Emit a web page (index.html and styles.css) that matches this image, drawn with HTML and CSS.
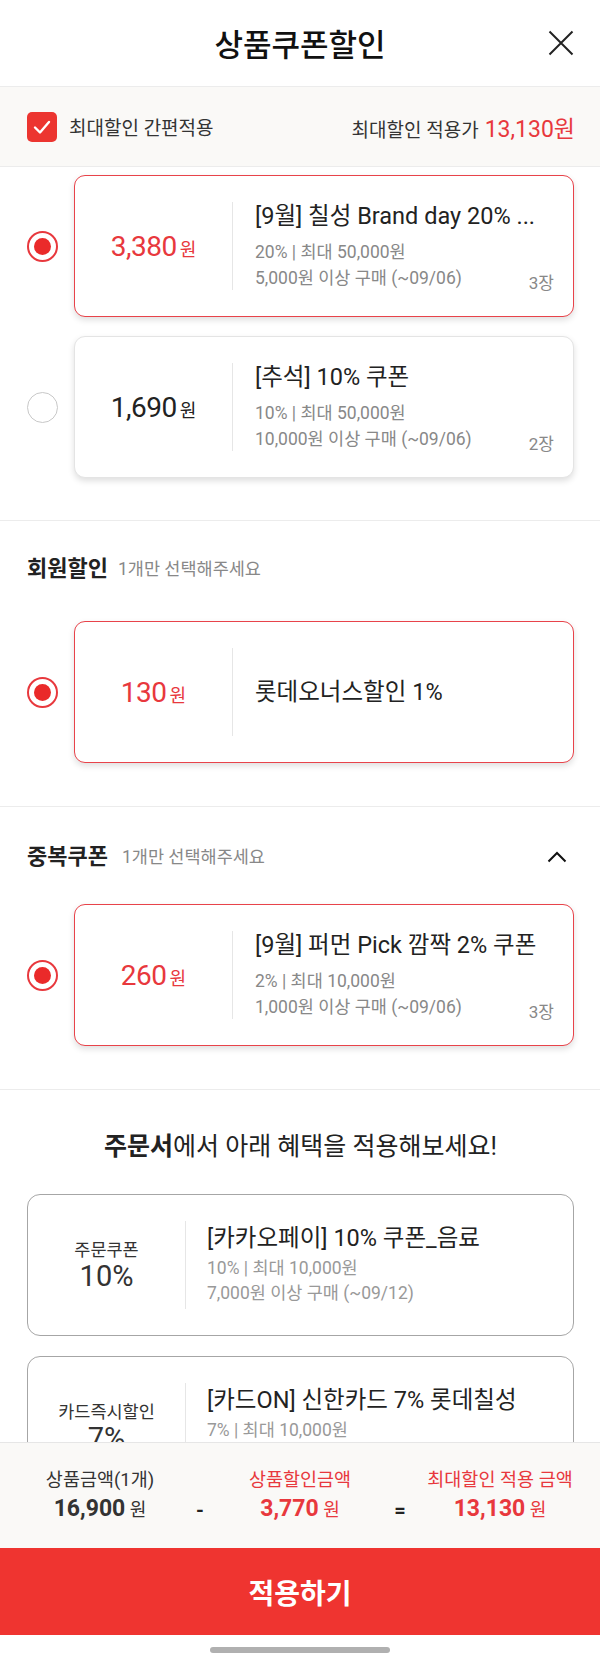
FILE: index.html
```html
<!DOCTYPE html>
<html lang="ko">
<head>
  <meta charset="utf-8">
  <meta name="viewport" content="width=device-width, initial-scale=1.0">
  <title>상품쿠폰할인</title>
  <link rel="stylesheet" href="styles.css">
</head>
<body>
  <div class="sheet">
    <header class="top">
      <h1 class="top-title">상품쿠폰할인</h1>
      <span class="close">
        <svg width="26" height="26" viewBox="0 0 26 26"><path d="M1.5 1.5 L24.5 24.5 M24.5 1.5 L1.5 24.5" stroke="#222" stroke-width="2" fill="none"/></svg>
      </span>
    </header>

    <div class="quick">
      <label class="quick-check">
        <span class="checkbox">
          <svg width="30" height="30" viewBox="0 0 30 30"><polyline points="8,15.5 13,20.5 22,10" stroke="#fff" stroke-width="2.4" fill="none" stroke-linecap="round" stroke-linejoin="round"/></svg>
        </span>
        최대할인 간편적용
      </label>
      <div class="quick-price">최대할인 적용가 <span class="red big">13,130원</span></div>
    </div>

    <div class="scroll">
      <!-- product coupons -->
      <section class="group first">
        <div class="row">
          <span class="radio on"></span>
          <div class="card active">
            <div class="amount red"><b>3,380</b><small>원</small></div>
            <div class="body">
              <p class="name">[9월] 칠성 Brand day 20% ...</p>
              <p class="meta">20% | 최대 50,000원</p>
              <p class="meta">5,000원 이상 구매 (~09/06)</p>
            </div>
            <span class="count">3장</span>
          </div>
        </div>
        <div class="row">
          <span class="radio"></span>
          <div class="card">
            <div class="amount"><b>1,690</b><small>원</small></div>
            <div class="body">
              <p class="name">[추석] 10% 쿠폰</p>
              <p class="meta">10% | 최대 50,000원</p>
              <p class="meta">10,000원 이상 구매 (~09/06)</p>
            </div>
            <span class="count">2장</span>
          </div>
        </div>
      </section>

      <!-- member discount -->
      <section class="group">
        <h2 class="group-head">회원할인 <span class="hint">1개만 선택해주세요</span></h2>
        <div class="row">
          <span class="radio on"></span>
          <div class="card active">
            <div class="amount red"><b>130</b><small>원</small></div>
            <div class="body">
              <p class="name">롯데오너스할인 1%</p>
            </div>
          </div>
        </div>
      </section>

      <!-- stacking coupon -->
      <section class="group">
        <h2 class="group-head">중복쿠폰 <span class="hint wide">1개만 선택해주세요</span>
          <svg class="chev" width="20" height="12" viewBox="0 0 20 12"><polyline points="1.5,10.5 10,2 18.5,10.5" stroke="#111" stroke-width="2" fill="none"/></svg>
        </h2>
        <div class="row">
          <span class="radio on"></span>
          <div class="card active">
            <div class="amount red"><b>260</b><small>원</small></div>
            <div class="body">
              <p class="name">[9월] 퍼먼 Pick 깜짝 2% 쿠폰</p>
              <p class="meta">2% | 최대 10,000원</p>
              <p class="meta">1,000원 이상 구매 (~09/06)</p>
            </div>
            <span class="count">3장</span>
          </div>
        </div>
      </section>

      <!-- order sheet benefits -->
      <section class="group benefits">
        <h2 class="benefit-head"><b>주문서</b>에서 아래 혜택을 적용해보세요!</h2>
        <div class="card plain">
          <div class="kind"><span>주문쿠폰</span><b>10%</b></div>
          <div class="body">
            <p class="name">[카카오페이] 10% 쿠폰_음료</p>
            <p class="meta">10% | 최대 10,000원</p>
            <p class="meta">7,000원 이상 구매 (~09/12)</p>
          </div>
        </div>
        <div class="card plain">
          <div class="kind"><span>카드즉시할인</span><b>7%</b></div>
          <div class="body">
            <p class="name">[카드ON] 신한카드 7% 롯데칠성</p>
            <p class="meta">7% | 최대 10,000원</p>
            <p class="meta">5,000원 이상 구매 (~09/30)</p>
          </div>
        </div>
      </section>
    </div>

    <footer class="sum">
      <div class="sum-col">
        <span class="sum-label">상품금액(1개)</span>
        <span class="sum-value"><b>16,900</b> 원</span>
      </div>
      <span class="op">-</span>
      <div class="sum-col red">
        <span class="sum-label">상품할인금액</span>
        <span class="sum-value"><b>3,770</b> 원</span>
      </div>
      <span class="op">=</span>
      <div class="sum-col red">
        <span class="sum-label">최대할인 적용 금액</span>
        <span class="sum-value"><b>13,130</b> 원</span>
      </div>
    </footer>
    <button class="apply">적용하기</button>
    <div class="home"><span class="home-bar"></span></div>
  </div>
</body>
</html>
```

FILE: styles.css
```css
html, body {
  margin: 0;
  padding: 0;
  background: #fff;
  color: #222;
  font-family: Roboto, "Noto Sans CJK KR", sans-serif;
}
p, h1, h2 { margin: 0; }
.red { color: #e8383d; }

.sheet {
  display: flex;
  flex-direction: column;
  width: 600px;
  height: 1661px;
  overflow: hidden;
}

/* header */
.top {
  flex: none;
  height: 86px;
  display: flex;
  align-items: center;
  justify-content: center;
  border-bottom: 1px solid #ececec;
  position: relative;
}
.top-title {
  font-size: 31px;
  font-weight: 500;
  color: #111;
  margin-top: -2px;
}
.close {
  position: absolute;
  right: 26px;
  top: 30px;
  display: flex;
}

/* quick apply band */
.quick {
  flex: none;
  height: 79px;
  background: #faf9f7;
  border-bottom: 1px solid #ececec;
  display: flex;
  align-items: center;
  justify-content: space-between;
  padding: 0 25px 0 27px;
}
.quick-check {
  display: flex;
  align-items: center;
  gap: 12px;
  font-size: 19px;
  color: #333;
}
.checkbox {
  width: 30px;
  height: 30px;
  border-radius: 5px;
  background: #ec3530;
  display: flex;
}
.quick-price {
  font-size: 19px;
  color: #333;
  display: flex;
  align-items: baseline;
  gap: 6px;
}
.big { font-size: 23px; }

/* scrolling list */
.scroll {
  flex: 1;
  overflow: hidden;
}
.group {
  border-bottom: 1px solid #ececec;
  padding: 36px 26px 43px 27px;
  display: flex;
  flex-direction: column;
}
.group.first {
  padding-top: 8px;
  padding-bottom: 42px;
  gap: 19px;
}
.group-head {
  display: flex;
  align-items: center;
  font-size: 22px;
  font-weight: 700;
  color: #222;
  line-height: 24px;
  margin-bottom: 40px;
}
.hint {
  font-size: 17.5px;
  font-weight: 400;
  color: #888;
  margin-left: 10px;
}
.hint.wide { margin-left: 14px; }
.chev { margin-left: auto; margin-right: 7px; }
.group:nth-child(3) { padding-top: 38px; }
.group:nth-child(3) .group-head { margin-bottom: 35px; }

.row {
  display: flex;
  align-items: center;
  gap: 16px;
}
.radio {
  flex: none;
  width: 31px;
  height: 31px;
  box-sizing: border-box;
  border-radius: 50%;
  border: 1.5px solid #c8c8c8;
  display: flex;
  align-items: center;
  justify-content: center;
}
.radio.on { border: 2px solid #e8383d; }
.radio.on::after {
  content: "";
  width: 17px;
  height: 17px;
  border-radius: 50%;
  background: #ea2a2a;
}

/* coupon cards */
.card {
  flex: 1;
  height: 142px;
  box-sizing: border-box;
  display: flex;
  align-items: center;
  background: #fff;
  border: 1px solid #e4e4e4;
  border-radius: 11px;
  box-shadow: 0 3px 6px rgba(0, 0, 0, 0.13);
  position: relative;
}
.card.active { border: 1.5px solid #e8434a; }
.amount {
  flex: none;
  width: 158px;
  height: 88px;
  box-sizing: border-box;
  border-right: 1px solid #e6e6e6;
  display: flex;
  align-items: center;
  justify-content: center;
  gap: 3px;
  color: #222;
}
.amount.red { color: #e8383d; }
.amount b {
  font-size: 28px;
  font-weight: 400;
  letter-spacing: -0.5px;
}
.amount small {
  font-size: 18px;
  margin-top: 3px;
}
.body {
  flex: 1;
  min-width: 0;
  padding-left: 22px;
  white-space: nowrap;
}
.name {
  font-size: 23.5px;
  line-height: 28px;
  color: #222;
  margin-bottom: 9px;
}
.body .name:only-child { margin-bottom: 0; }
.meta {
  font-size: 17.5px;
  line-height: 26px;
  color: #888;
}
.count {
  position: absolute;
  right: 19px;
  bottom: 21px;
  font-size: 17px;
  line-height: 24px;
  color: #888;
}

/* order sheet benefits */
.group.benefits {
  padding-top: 42px;
  gap: 20px;
  border-bottom: 0;
}
.benefit-head {
  font-size: 25px;
  font-weight: 400;
  line-height: 30px;
  text-align: center;
  color: #222;
  margin-bottom: 12px;
}
.benefit-head b { font-weight: 700; }
.card.plain {
  flex: none;
  border: 1.5px solid #a6a6a6;
  border-radius: 13px;
  box-shadow: none;
}
.kind {
  flex: none;
  width: 158px;
  height: 88px;
  box-sizing: border-box;
  border-right: 1px solid #e6e6e6;
  display: flex;
  flex-direction: column;
  align-items: center;
  justify-content: center;
  color: #333;
}
.kind span {
  font-size: 17.5px;
  line-height: 22px;
}
.kind b {
  font-size: 29px;
  font-weight: 400;
  line-height: 30px;
}
.plain .body { padding-left: 21px; }
.plain .name { margin-bottom: 4px; }
.plain .meta { line-height: 25px; color: #999; }

/* totals */
.sum {
  flex: none;
  height: 105px;
  background: #faf9f7;
  border-top: 1px solid #e6e6e6;
  display: flex;
  align-items: center;
  padding: 0 10px;
}
.sum-col {
  width: 180px;
  display: flex;
  flex-direction: column;
  align-items: center;
  color: #333;
}
.sum-col.red { color: #e8383d; }
.sum-label {
  font-size: 18.5px;
  line-height: 27px;
}
.sum-value {
  font-size: 18px;
  line-height: 30px;
}
.sum-value b {
  font-size: 23px;
  font-weight: 700;
}
.op {
  width: 20px;
  text-align: center;
  font-size: 20px;
  font-weight: 700;
  color: #222;
  margin-top: 28px;
}

.apply {
  flex: none;
  height: 87px;
  border: 0;
  margin: 0;
  background: #ef3430;
  color: #fff;
  font-family: Roboto, "Noto Sans CJK KR", sans-serif;
  font-size: 28px;
  font-weight: 700;
}
.home {
  flex: none;
  height: 26px;
  display: flex;
  justify-content: center;
  padding-top: 12px;
  box-sizing: border-box;
}
.home-bar {
  width: 180px;
  height: 6px;
  border-radius: 3px;
  background: #b0b0b0;
}
```
